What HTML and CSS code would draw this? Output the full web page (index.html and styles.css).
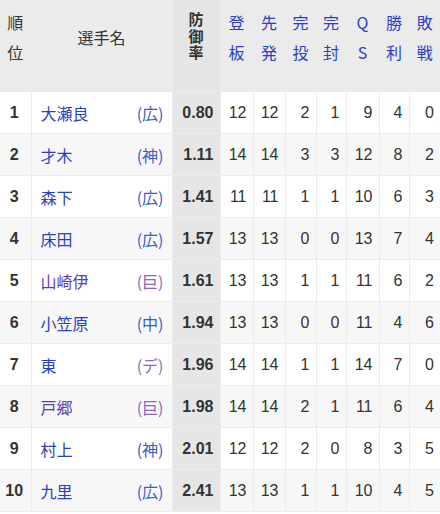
FILE: index.html
```html
<!DOCTYPE html>
<html lang="ja">
<head>
<meta charset="utf-8">
<link rel="stylesheet" href="styles.css">
</head>
<body>
<table class="stats">
  <colgroup>
    <col class="c-rank"><col class="c-name"><col class="c-era">
    <col class="c-a"><col class="c-b"><col class="c-c"><col class="c-d">
    <col class="c-e"><col class="c-f"><col class="c-g">
  </colgroup>
  <thead>
    <tr>
      <th class="h-plain">順<br>位</th>
      <th class="h-plain">選手名</th>
      <th class="h-sel"><span class="vt">防御率</span></th>
      <th class="h-link">登<br>板</th>
      <th class="h-link">先<br>発</th>
      <th class="h-link">完<br>投</th>
      <th class="h-link">完<br>封</th>
      <th class="h-link">Q<br>S</th>
      <th class="h-link">勝<br>利</th>
      <th class="h-link">敗<br>戦</th>
    </tr>
  </thead>
  <tbody>
    <tr><td class="rank">1</td><td class="name"><div class="nm"><a class="pl">大瀬良</a><span class="tm">(広)</span></div></td><td class="era">0.80</td><td>12</td><td>12</td><td>2</td><td>1</td><td>9</td><td>4</td><td>0</td></tr>
    <tr><td class="rank">2</td><td class="name"><div class="nm"><a class="pl">才木</a><span class="tm">(神)</span></div></td><td class="era">1.11</td><td>14</td><td>14</td><td>3</td><td>3</td><td>12</td><td>8</td><td>2</td></tr>
    <tr><td class="rank">3</td><td class="name"><div class="nm"><a class="pl">森下</a><span class="tm">(広)</span></div></td><td class="era">1.41</td><td>11</td><td>11</td><td>1</td><td>1</td><td>10</td><td>6</td><td>3</td></tr>
    <tr><td class="rank">4</td><td class="name"><div class="nm"><a class="pl">床田</a><span class="tm">(広)</span></div></td><td class="era">1.57</td><td>13</td><td>13</td><td>0</td><td>0</td><td>13</td><td>7</td><td>4</td></tr>
    <tr><td class="rank">5</td><td class="name"><div class="nm"><a class="pl visited">山崎伊</a><span class="tm visited">(巨)</span></div></td><td class="era">1.61</td><td>13</td><td>13</td><td>1</td><td>1</td><td>11</td><td>6</td><td>2</td></tr>
    <tr><td class="rank">6</td><td class="name"><div class="nm"><a class="pl">小笠原</a><span class="tm">(中)</span></div></td><td class="era">1.94</td><td>13</td><td>13</td><td>0</td><td>0</td><td>11</td><td>4</td><td>6</td></tr>
    <tr><td class="rank">7</td><td class="name"><div class="nm"><a class="pl">東</a><span class="tm visited">(デ)</span></div></td><td class="era">1.96</td><td>14</td><td>14</td><td>1</td><td>1</td><td>14</td><td>7</td><td>0</td></tr>
    <tr><td class="rank">8</td><td class="name"><div class="nm"><a class="pl visited">戸郷</a><span class="tm visited">(巨)</span></div></td><td class="era">1.98</td><td>14</td><td>14</td><td>2</td><td>1</td><td>11</td><td>6</td><td>4</td></tr>
    <tr><td class="rank">9</td><td class="name"><div class="nm"><a class="pl">村上</a><span class="tm">(神)</span></div></td><td class="era">2.01</td><td>12</td><td>12</td><td>2</td><td>0</td><td>8</td><td>3</td><td>5</td></tr>
    <tr><td class="rank">10</td><td class="name"><div class="nm"><a class="pl">九里</a><span class="tm">(広)</span></div></td><td class="era">2.41</td><td>13</td><td>13</td><td>1</td><td>1</td><td>10</td><td>4</td><td>5</td></tr>
  </tbody>
</table>
</body>
</html>
```

FILE: styles.css
```css
html, body {
  margin: 0;
  padding: 0;
  background: #fff;
}

body {
  font-family: "Liberation Sans", "Noto Sans CJK JP", sans-serif;
  font-size: 16px;
  color: #333;
}

.stats {
  width: 440px;
  border-collapse: collapse;
  table-layout: fixed;
}

.c-rank { width: 31px; }
.c-name { width: 141px; }
.c-era { width: 48px; }
.c-a { width: 33px; }
.c-b { width: 32px; }
.c-c { width: 31px; }
.c-d { width: 30px; }
.c-e { width: 33px; }
.c-f { width: 30px; }
.c-g { width: 31px; }

.stats th,
.stats td {
  border: 1px solid #ececec;
  padding: 0;
}

.stats tr > :first-child { border-left: none; }
.stats tr > :last-child { border-right: none; }
.stats thead th { border-top: none; }

.stats th {
  background: #ebebeb;
  font-weight: normal;
  height: 60px;
  padding: 7px 0 24px;
  line-height: 30px;
  vertical-align: middle;
  text-align: center;
  font-family: "Noto Sans CJK JP", sans-serif;
}

.stats th.h-plain { color: #333; }
.stats th.h-link { color: #2a3fc4; }
.stats th.h-sel {
  background: #e5e5e5;
  font-weight: bold;
  color: #333;
  line-height: 1;
}

.vt {
  display: inline-block;
  vertical-align: middle;
  writing-mode: vertical-rl;
  font-size: 15px;
  line-height: 1;
  letter-spacing: 1.5px;
}

.stats td {
  height: 41px;
  text-align: right;
  padding-right: 6px;
  vertical-align: middle;
}

.stats tbody tr:nth-child(even) td { background: #f7f7f7; }

.stats td.rank {
  text-align: center;
  padding: 0 2px 0 0;
  font-weight: bold;
}

.stats td.name {
  text-align: left;
  padding: 0 8px 0 9px;
}

.stats tbody tr td.era {
  background: #e6e6e6;
  font-weight: bold;
}

.nm {
  display: flex;
  justify-content: space-between;
  align-items: center;
}

.pl {
  color: #2a3fc4;
  font-family: "Noto Sans CJK JP", sans-serif;
  text-decoration: none;
}

.tm {
  color: #3a5cc4;
  font-family: "Noto Sans CJK JP", sans-serif;
}

.pl.visited { color: #5a3bb4; }
.tm.visited { color: #8a68b8; }
```
